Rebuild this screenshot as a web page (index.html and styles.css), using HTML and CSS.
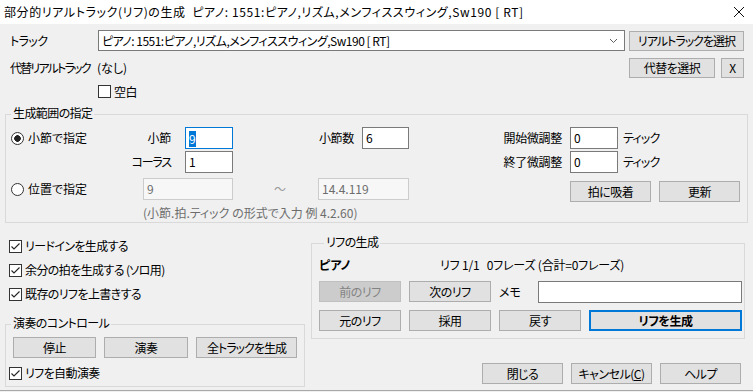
FILE: index.html
```html
<!DOCTYPE html>
<html lang="ja">
<head>
    <meta charset="UTF-8">
    <title>部分的リアルトラック(リフ)の生成</title>
    <link rel="stylesheet" href="styles.css">
</head>
<body>
    <div class="window">
        <div class="titlebar">
            <span class="title">部分的リアルトラック(リフ)の生成  ピアノ: 1551:ピアノ,リズム,メンフィススウィング,Sw190 [ RT]</span>
            <svg class="close" width="12" height="12" viewBox="0 0 12 12"><path d="M1 1L11 11M11 1L1 11" stroke="#111" stroke-width="1"/></svg>
        </div>

        <!-- track selection -->
        <div class="row track-row">
            <span class="row-label">トラック</span>
            <div class="combo">
                <span>ピアノ: 1551:ピアノ,リズム,メンフィススウィング,Sw190 [ RT]</span>
                <svg width="9" height="6" viewBox="0 0 9 6"><path d="M1 1L4.5 4.5L8 1" fill="none" stroke="#606060" stroke-width="1"/></svg>
            </div>
            <button class="btn btn-track">リアルトラックを選択</button>
        </div>

        <div class="row alt-row">
            <span class="row-label alt-label">代替リアルトラック</span>
            <span>(なし)</span>
            <button class="btn btn-alt">代替を選択</button>
            <button class="btn btn-x">X</button>
        </div>

        <div class="row blank-row">
            <label class="check-row"><span class="check"></span>空白</label>
        </div>

        <!-- range -->
        <div class="group range">
            <div class="group-title">生成範囲の指定</div>
            <div class="range-grid">
                <label class="opt opt-bar"><span class="radio on"></span>小節で指定</label>
                <span class="lbl lbl-bar">小節</span>
                <span class="edit focus ed-bar"><span class="sel">9</span></span>
                <span class="lbl lbl-count">小節数</span>
                <span class="edit ed-count">6</span>
                <span class="lbl lbl-start">開始微調整</span>
                <span class="edit ed-start">0</span>
                <span class="unit unit-start">ティック</span>

                <span class="lbl lbl-chorus">コーラス</span>
                <span class="edit ed-chorus">1</span>
                <span class="lbl lbl-end">終了微調整</span>
                <span class="edit ed-end">0</span>
                <span class="unit unit-end">ティック</span>

                <label class="opt opt-pos"><span class="radio"></span>位置で指定</label>
                <span class="edit disabled ed-from">9</span>
                <span class="tilde">～</span>
                <span class="edit disabled ed-to">14.4.119</span>
                <div class="snap-btns">
                    <button class="btn">拍に吸着</button>
                    <button class="btn">更新</button>
                </div>

                <span class="hint">(小節.拍.ティック の形式で入力 例 4.2.60)</span>
            </div>
        </div>

        <div class="lower">
            <div class="lower-left">
                <div class="options">
                    <label class="check-row"><span class="check on"><svg width="11" height="11" viewBox="0 0 11 11"><path d="M1.5 5.5L4 8L9.5 2.5" fill="none" stroke="#222" stroke-width="1.1"/></svg></span>リードインを生成する</label>
                    <label class="check-row"><span class="check on"><svg width="11" height="11" viewBox="0 0 11 11"><path d="M1.5 5.5L4 8L9.5 2.5" fill="none" stroke="#222" stroke-width="1.1"/></svg></span>余分の拍を生成する (ソロ用)</label>
                    <label class="check-row"><span class="check on"><svg width="11" height="11" viewBox="0 0 11 11"><path d="M1.5 5.5L4 8L9.5 2.5" fill="none" stroke="#222" stroke-width="1.1"/></svg></span>既存のリフを上書きする</label>
                </div>

                <div class="group play">
                    <div class="group-title">演奏のコントロール</div>
                    <div class="play-btns">
                        <button class="btn b-stop">停止</button>
                        <button class="btn b-play">演奏</button>
                        <button class="btn b-all">全トラックを生成</button>
                    </div>
                    <label class="check-row auto"><span class="check on"><svg width="11" height="11" viewBox="0 0 11 11"><path d="M1.5 5.5L4 8L9.5 2.5" fill="none" stroke="#222" stroke-width="1.1"/></svg></span>リフを自動演奏</label>
                </div>
            </div>

            <div class="lower-right">
                <div class="group riff">
                    <div class="group-title">リフの生成</div>
                    <div class="riff-info">
                        <span class="riff-name">ピアノ</span>
                        <span class="riff-count">リフ 1/1   0フレーズ (合計=0フレーズ)</span>
                    </div>
                    <div class="riff-row">
                        <button class="btn riff-btn" disabled>前のリフ</button>
                        <button class="btn riff-btn">次のリフ</button>
                        <span class="memo-label">メモ</span>
                        <span class="edit memo"></span>
                    </div>
                    <div class="riff-row">
                        <button class="btn riff-btn">元のリフ</button>
                        <button class="btn riff-btn">採用</button>
                        <button class="btn riff-btn">戻す</button>
                        <button class="btn default">リフを生成</button>
                    </div>
                </div>

                <div class="dialog-btns">
                    <button class="btn">閉じる</button>
                    <button class="btn">キャンセル(<u>C</u>)</button>
                    <button class="btn">ヘルプ</button>
                </div>
            </div>
        </div>
    </div>
</body>
</html>
```

FILE: styles.css
```css
* {
    margin: 0;
    padding: 0;
    box-sizing: border-box;
}

body {
    width: 753px;
    height: 392px;
    overflow: hidden;
    background: #f0f0f0;
    color: #000;
    font-family: "Noto Sans CJK JP", "Noto Sans", sans-serif;
    font-size: 12px;
    line-height: 16px;
    font-feature-settings: "palt";
}

.window {
    height: 391px;
    border-bottom: 1px solid #a8a8a8;
}

.titlebar {
    height: 24px;
    background: #fff;
    display: flex;
    align-items: center;
    justify-content: space-between;
    padding: 0 8px 0 4px;
}

.title {
    white-space: pre;
    letter-spacing: 0.6px;
}

/* generic controls */

.btn {
    height: 21px;
    border: 1px solid #adadad;
    background: #e1e1e1;
    font: inherit;
    line-height: 19px;
    letter-spacing: -0.5px;
    color: #000;
    text-align: center;
    white-space: nowrap;
}

.btn:disabled {
    background: #cccccc;
    border-color: #bfbfbf;
    color: #838383;
}

.btn.default {
    border: 2px solid #0078d7;
    line-height: 17px;
    font-weight: bold;
}

.edit {
    display: block;
    height: 22px;
    border: 1px solid #7a7a7a;
    background: #fff;
    padding: 0 3px;
    line-height: 20px;
    white-space: nowrap;
}

.edit.focus {
    border-color: #0078d7;
}

.edit.disabled {
    border-color: #cccccc;
    background: #f7f7f7;
    color: #6d6d6d;
}

.sel {
    display: inline-block;
    background: #0078d7;
    color: #fff;
    line-height: 16px;
    vertical-align: middle;
    margin-top: -2px;
}

.check {
    width: 13px;
    height: 13px;
    border: 1px solid #333;
    background: #fff;
    display: inline-flex;
    align-items: center;
    justify-content: center;
    flex-shrink: 0;
}

.check-row {
    display: flex;
    align-items: center;
    gap: 3px;
    white-space: nowrap;
    letter-spacing: -0.6px;
}

.radio {
    width: 13px;
    height: 13px;
    border: 1px solid #333;
    border-radius: 50%;
    background: #fff;
    flex-shrink: 0;
}

.radio.on {
    background: radial-gradient(circle, #222 3px, #fff 3.6px);
}

.group {
    border: 1px solid #d9d9d9;
}

.group-title {
    display: table;
    margin: -10px 0 0 5px;
    padding: 0 2px;
    background: #f0f0f0;
    letter-spacing: -0.6px;
}

/* top rows */

.row {
    display: flex;
    align-items: center;
    padding: 0 9px 0 10px;
    white-space: nowrap;
}

.track-row {
    margin-top: 6px;
    height: 21px;
}

.row-label {
    width: 88px;
    flex-shrink: 0;
    letter-spacing: -0.6px;
}

.combo {
    width: 527px;
    height: 21px;
    border: 1px solid #7a7a7a;
    background: #fff;
    display: flex;
    align-items: center;
    justify-content: space-between;
    padding: 0 6px 0 3px;
    letter-spacing: -0.5px;
}

.btn-track {
    width: 115px;
    height: 20px;
    line-height: 18px;
    margin-left: 4px;
    letter-spacing: -1px;
}

.alt-row {
    margin-top: 7px;
    height: 20px;
}

.alt-label {
    width: 87px;
    letter-spacing: -1.8px;
}

.btn-alt {
    width: 86px;
    height: 20px;
    line-height: 18px;
    margin-left: auto;
}

.btn-x {
    width: 23px;
    height: 20px;
    line-height: 18px;
    margin-left: 6px;
}

.blank-row {
    margin-top: 6px;
    height: 15px;
    padding-left: 98px;
}

/* range group */

.range {
    margin: 15px 5px 0;
    padding-bottom: 1px;
}

.range-grid {
    display: grid;
    grid-template-columns: 137px 42px 48px 85px 44px 47px 92px 69px 48px 1fr;
    grid-template-rows: 24px 27px 22px 21px;
    align-items: start;
    margin-top: 6px;
}

.lbl,
.unit,
.tilde,
.opt {
    line-height: 22px;
    height: 22px;
    white-space: nowrap;
}

.opt {
    display: flex;
    align-items: center;
    gap: 4px;
    padding-left: 5px;
}

.lbl {
    justify-self: end;
    letter-spacing: -0.3px;
}

.unit {
    padding-left: 5px;
    letter-spacing: -0.8px;
}

.opt-bar { grid-area: 1 / 1; }
.lbl-bar { grid-area: 1 / 1 / 2 / 3; padding-right: 14px; }
.ed-bar { grid-area: 1 / 3; }
.lbl-count { grid-area: 1 / 4 / 2 / 6; padding-right: 8px; }
.ed-count { grid-area: 1 / 6; }
.lbl-start { grid-area: 1 / 7 / 2 / 9; padding-right: 8px; }
.ed-start { grid-area: 1 / 9; }
.unit-start { grid-area: 1 / 10; }

.lbl-chorus { grid-area: 2 / 1 / 3 / 3; padding-right: 14px; letter-spacing: -1.2px; }
.ed-chorus { grid-area: 2 / 3; }
.lbl-end { grid-area: 2 / 7 / 3 / 9; padding-right: 8px; }
.ed-end { grid-area: 2 / 9; }
.unit-end { grid-area: 2 / 10; }

.opt-pos { grid-area: 3 / 1; }
.ed-from { grid-area: 3 / 2 / 4 / 4; }
.tilde {
    grid-area: 3 / 4;
    justify-self: center;
    padding-left: 9px;
    color: #9a9a9a;
}
.ed-to { grid-area: 3 / 5 / 4 / 7; }

.snap-btns {
    grid-area: 3 / 9 / 4 / 11;
    display: flex;
    gap: 8px;
    margin-top: 3px;
}

.snap-btns .btn {
    width: 81px;
}

.hint {
    grid-area: 4 / 2 / 5 / -1;
    align-self: end;
    color: #6d6d6d;
    white-space: nowrap;
}

/* lower half */

.lower {
    display: flex;
    gap: 6px;
    padding-left: 5px;
}

.lower-left {
    width: 300px;
}

.options {
    padding: 11px 0 0 4px;
}

.options .check-row {
    height: 24px;
}

.play {
    margin-top: 18px;
    padding: 0 0 5px;
}

.play-btns {
    display: flex;
    gap: 8px;
    margin-top: 6px;
    padding-left: 7px;
}

.b-stop { width: 83px; }
.b-play { width: 84px; }
.b-all { width: 101px; letter-spacing: -1px; }

.auto {
    margin-top: 7px;
    padding-left: 3px;
    height: 16px;
}

.lower-right {
    width: 434px;
}

.riff {
    margin-top: 20px;
    padding: 0 2px 7px 7px;
}

.riff-info {
    display: flex;
    margin-top: 7px;
    white-space: pre;
}

.riff-name {
    width: 121px;
    font-weight: bold;
}

.riff-count {
    letter-spacing: -0.2px;
}

.riff-row {
    display: flex;
    align-items: center;
    gap: 8px;
    margin-top: 8px;
    height: 21px;
}

.riff-btn {
    width: 82px;
}

.memo-label {
    width: 31px;
}

.memo {
    flex: 1;
}

.riff-row .default {
    flex: 1;
}

.dialog-btns {
    display: flex;
    justify-content: flex-end;
    gap: 8px;
    margin-top: 24px;
    padding-right: 4px;
}

.dialog-btns .btn {
    width: 81px;
}
```
